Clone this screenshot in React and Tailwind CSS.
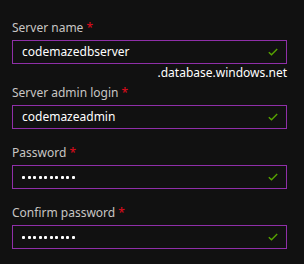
import React from 'react';

function Check() {
  return (
    <svg width="10" height="8" viewBox="0 0 10 8" className="shrink-0">
      <polyline points="0.8,4.2 3.5,6.8 9.2,1" fill="none" stroke="#57a300" strokeWidth="1.4" />
    </svg>
  );
}

function Dots() {
  return (
    <span className="flex-1 flex items-center gap-[2.5px]" aria-label="••••••••••">
      {Array.from({ length: 10 }).map((_, i) => (
        <span key={i} className="w-[3px] h-[3px] rounded-[1px] bg-white" />
      ))}
    </span>
  );
}

function Field({ label, value, password, className = '' }) {
  return (
    <div className={className}>
      <div className="h-[18px] leading-[18px] text-[12px] text-[#c8c6c4]">
        {label} <span className="text-[#e00b1c]">*</span>
      </div>
      <div className="mt-[3px] h-[24px] w-[275px] border border-[#8f2fa8] flex items-center pl-[9px] pr-[8px]">
        {password ? (
          <Dots />
        ) : (
          <span className="flex-1 text-white text-[12px] leading-none">{value}</span>
        )}
        <Check />
      </div>
    </div>
  );
}

export default function App() {
  return (
    <div className="w-[304px] h-[264px] bg-[#111111] pl-[12px] pt-[19px] font-['Noto_Sans','Open_Sans',sans-serif]">
      <Field label="Server name" value="codemazedbserver" />
      <div className="w-[275px] h-[18px] leading-[18px] text-right text-[12px] text-white">
        .database.windows.net
      </div>
      <Field label="Server admin login" value="codemazeadmin" className="mt-[2px]" />
      <Field label="Password" password className="mt-[15px]" />
      <Field label="Confirm password" password className="mt-[15px]" />
    </div>
  );
}
